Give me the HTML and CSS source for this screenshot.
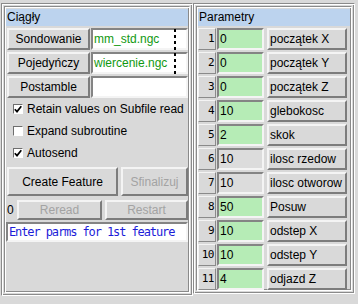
FILE: index.html
```html
<!DOCTYPE html>
<html lang="pl">
<head>
    <meta charset="UTF-8">
    <meta name="viewport" content="width=device-width, initial-scale=1.0">
    <title>Ciągły</title>
    <link rel="stylesheet" href="styles.css">
</head>
<body>

    <div class="window">
        <!-- Left side: file selection and feature controls -->
        <div class="panel left">
            <div class="group">
                <div class="title">Ciągły</div>

                <div class="files">
                    <div class="file-row">
                        <button class="btn file-btn">Sondowanie</button>
                        <div class="entry file-entry">mm_std.ngc</div>
                    </div>
                    <div class="file-row">
                        <button class="btn file-btn">Pojedyńczy</button>
                        <div class="entry file-entry">wiercenie.ngc</div>
                    </div>
                    <div class="file-row">
                        <button class="btn file-btn">Postamble</button>
                        <div class="entry file-entry"></div>
                    </div>
                    <!-- dashed column marker drawn over the entries -->
                    <div class="dash"></div>
                </div>

                <label class="check">
                    <span class="box"><svg viewBox="0 0 8 8" width="8" height="8"><path d="M0.8 4.2 L3 6.6 L7.3 1.2" fill="none" stroke="#000" stroke-width="1.7"/></svg></span>
                    Retain values on Subfile read
                </label>
                <label class="check">
                    <span class="box"></span>
                    Expand subroutine
                </label>
                <label class="check">
                    <span class="box"><svg viewBox="0 0 8 8" width="8" height="8"><path d="M0.8 4.2 L3 6.6 L7.3 1.2" fill="none" stroke="#000" stroke-width="1.7"/></svg></span>
                    Autosend
                </label>

                <div class="actions">
                    <button class="btn create">Create Feature</button>
                    <button class="btn finish disabled">Sfinalizuj</button>
                </div>

                <div class="actions small">
                    <span class="count">0</span>
                    <button class="btn reread disabled">Reread</button>
                    <button class="btn restart disabled">Restart</button>
                </div>

                <div class="entry status">Enter parms for 1st feature</div>
            </div>
        </div>

        <!-- Right side: parameter list -->
        <div class="panel right">
            <div class="group">
                <div class="title">Parametry</div>

                <div class="params">
                    <div class="param"><span class="num">1</span><div class="entry val">0</div><span class="name">początek X</span></div>
                    <div class="param"><span class="num">2</span><div class="entry val">0</div><span class="name">początek Y</span></div>
                    <div class="param"><span class="num">3</span><div class="entry val">0</div><span class="name">początek Z</span></div>
                    <div class="param"><span class="num">4</span><div class="entry val">10</div><span class="name">glebokosc</span></div>
                    <div class="param"><span class="num">5</span><div class="entry val">2</div><span class="name">skok</span></div>
                    <div class="param"><span class="num">6</span><div class="entry val off">10</div><span class="name">ilosc rzedow</span></div>
                    <div class="param"><span class="num">7</span><div class="entry val off">10</div><span class="name">ilosc otworow</span></div>
                    <div class="param"><span class="num">8</span><div class="entry val">50</div><span class="name">Posuw</span></div>
                    <div class="param"><span class="num">9</span><div class="entry val">10</div><span class="name">odstep X</span></div>
                    <div class="param"><span class="num">10</span><div class="entry val">10</div><span class="name">odstep Y</span></div>
                    <div class="param"><span class="num">11</span><div class="entry val">4</div><span class="name">odjazd Z</span></div>
                </div>
            </div>
        </div>
    </div>

</body>
</html>
```

FILE: styles.css
```css
/* Reset */
* {
    margin: 0;
    padding: 0;
    box-sizing: border-box;
}

body {
    background: #d9d9d9;
    font-family: "Liberation Sans", Arial, sans-serif;
    font-size: 12px;
    color: #000;
    width: 358px;
    height: 304px;
    overflow: hidden;
}

.window {
    display: flex;
    padding: 3px 0 0 1px;
}

/* Groove frames (outer frame + labelframe inside) */
.panel {
    border: 1px solid;
    border-color: #8a8a8a #fff #fff #8a8a8a;
    box-shadow: inset 1px 1px #fff, inset -1px -1px #8a8a8a;
    padding: 2px;
}

.panel.left {
    width: 192px;
    height: 293px;
}

.panel.right {
    width: 162px;
    height: 291px;
}

.group {
    height: 100%;
    border: 1px solid;
    border-color: #8a8a8a #fff #fff #8a8a8a;
    box-shadow: inset 1px 1px #fff, inset -1px -1px #8a8a8a;
    padding: 2px 1px 1px 1px;
}

.title {
    background: #bcd3ee;
    height: 17px;
    line-height: 17px;
    padding-left: 1px;
}

/* Tk-like raised button */
.btn {
    font: inherit;
    color: #000;
    background: #d9d9d9;
    border: 2px solid;
    border-color: #f4f4f4 #7c7c7c #7c7c7c #f4f4f4;
    text-align: center;
}

.btn.disabled {
    color: #a3a3a3;
}

/* Tk-like sunken entry */
.entry {
    background: #fff;
    border: 2px solid;
    border-color: #848484 #f4f4f4 #f4f4f4 #848484;
    padding-left: 1px;
    white-space: nowrap;
    overflow: hidden;
}

/* File rows */
.files {
    position: relative;
    margin-top: 2px;
    display: flex;
    flex-direction: column;
    gap: 2px;
}

.file-row {
    display: flex;
    height: 22px;
}

.file-btn {
    width: 83px;
    margin-left: 1px;
}

.file-entry {
    flex: 1;
    margin-left: 1px;
    line-height: 18px;
    color: #119911;
}

.dash {
    position: absolute;
    left: 168px;
    top: 1px;
    width: 2px;
    height: 46px;
    background: repeating-linear-gradient(to bottom, #000 0 3px, transparent 3px 6px);
}

/* Checkbuttons */
.check {
    display: flex;
    align-items: center;
    height: 22px;
    padding-left: 7px;
}

.box {
    width: 10px;
    height: 10px;
    margin-right: 4px;
    background: #fff;
    border: 1px solid;
    border-color: #6e6e6e #fff #fff #6e6e6e;
    display: flex;
    align-items: center;
    justify-content: center;
}

/* Action buttons */
.actions {
    display: flex;
    margin-top: 3px;
    height: 29px;
}

.create {
    width: 111px;
    margin-left: 1px;
}

.finish {
    flex: 1;
    margin-left: 3px;
}

.actions.small {
    margin-top: 4px;
    height: 20px;
}

.count {
    width: 11px;
    padding-left: 1px;
    line-height: 20px;
}

.reread {
    width: 85px;
}

.restart {
    flex: 1;
    margin-left: 3px;
}

.status {
    margin-top: 2px;
    height: 20px;
    line-height: 16px;
    font-family: "DejaVu Sans Mono", monospace;
    font-size: 12px;
    letter-spacing: -1.1px;
    color: #1c1cd8;
}

/* Parameter rows */
.params {
    margin-top: 2px;
    display: flex;
    flex-direction: column;
    gap: 2px;
}

.param {
    display: flex;
    height: 22px;
}

.num {
    width: 18px;
    border: 1px solid;
    border-color: #f4f4f4 #8a8a8a #8a8a8a #f4f4f4;
    text-align: right;
    padding-right: 1px;
    line-height: 20px;
    font-family: "DejaVu Sans Mono", monospace;
    font-size: 11px;
    letter-spacing: -0.5px;
}

.val {
    width: 47px;
    margin-left: 1px;
    line-height: 18px;
    background: #b6ecb6;
}

.val.off {
    background: #dcdcdc;
}

.name {
    width: 80px;
    margin-left: 3px;
    border: 2px solid;
    border-color: #f4f4f4 #7c7c7c #7c7c7c #f4f4f4;
    padding-left: 1px;
    line-height: 18px;
    white-space: nowrap;
}
```
